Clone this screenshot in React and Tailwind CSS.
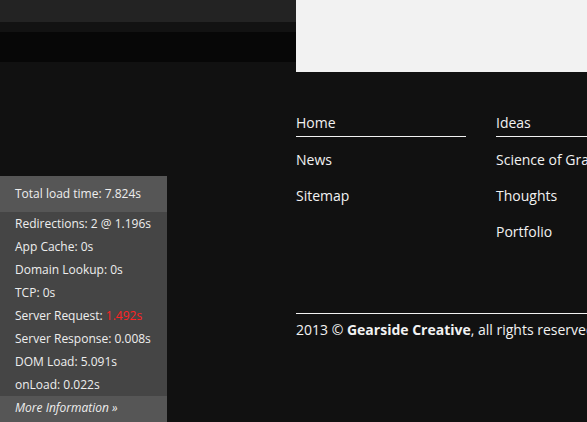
import React from 'react';

const stats = [
  { label: 'Redirections', value: '2 @ 1.196s' },
  { label: 'App Cache', value: '0s' },
  { label: 'Domain Lookup', value: '0s' },
  { label: 'TCP', value: '0s' },
  { label: 'Server Request', value: '1.492s', slow: true },
  { label: 'Server Response', value: '0.008s' },
  { label: 'DOM Load', value: '5.091s' },
  { label: 'onLoad', value: '0.022s' },
];

const NavColumn = ({ items }) => (
  <ul className="w-[170px] shrink-0">
    {items.map((item, i) => (
      <li
        key={item}
        className={`text-[14px] text-[#f2f2f2] whitespace-nowrap ${
          i === 0
            ? 'h-[26px] leading-[26px] box-content border-b border-[#f2f2f2]'
            : 'h-[36px] leading-[36px]'
        } ${i === 1 ? 'mt-[5px]' : ''}`}
      >
        {item}
      </li>
    ))}
  </ul>
);

export default function App() {
  return (
    <div
      className="relative w-[587px] h-[422px] overflow-hidden bg-[#111111]"
      style={{ fontFamily: '"Open Sans", sans-serif' }}
    >
      {/* header bands */}
      <div className="h-[22px] bg-[#232323]" />
      <div className="h-[10px] bg-[#121212]" />
      <div className="h-[30px] bg-[#070707]" />

      {/* white content box */}
      <div className="absolute left-[296px] top-0 w-[300px] h-[72px] bg-[#f2f2f2]" />

      {/* footer */}
      <div className="pl-[296px] pt-[48px]">
        <div className="flex gap-[30px]">
          <NavColumn items={['Home', 'News', 'Sitemap']} />
          <NavColumn items={['Ideas', 'Science of Gravity', 'Thoughts', 'Portfolio']} />
        </div>
        <div className="mt-[63px] border-t border-[#f2f2f2] w-[400px]" />
        <p className="pt-[6px] leading-[20px] text-[14px] text-[#f2f2f2] whitespace-nowrap">
          2013 © <span className="font-bold">Gearside Creative</span>, all rights reserved.
        </p>
      </div>

      {/* performance timing panel */}
      <div className="absolute left-0 top-[176px] w-[167px] text-[12px] text-[#eeeeee]">
        <div className="h-[36px] bg-[#565656] pl-[15px] leading-[36px]">Total load time: 7.824s</div>
        <div className="bg-[#454545]">
          {stats.map((s) => (
            <div key={s.label} className="h-[23px] leading-[23px] pl-[15px] whitespace-nowrap">
              {s.label}: <span className={s.slow ? 'text-[#ff2222]' : ''}>{s.value}</span>
            </div>
          ))}
        </div>
        <div className="h-[26px] bg-[#565656] pl-[15px] leading-[24px] italic">More Information »</div>
      </div>
    </div>
  );
}
